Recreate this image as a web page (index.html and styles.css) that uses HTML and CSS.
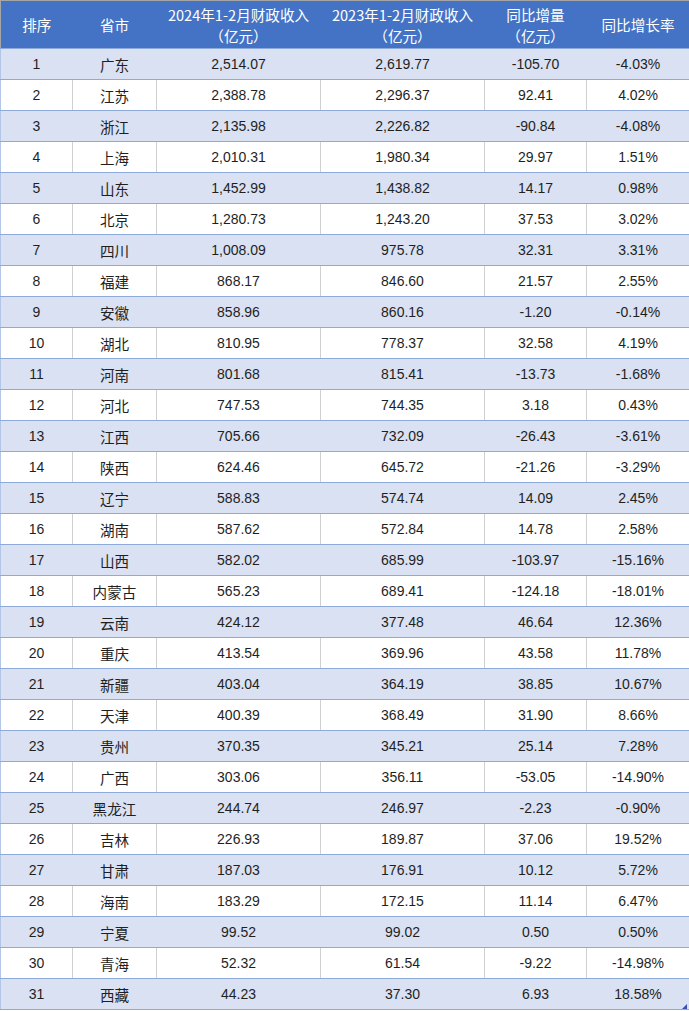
FILE: index.html
```html
<!DOCTYPE html>
<html lang="zh">
<head>
<meta charset="utf-8">
<link rel="stylesheet" href="styles.css">
</head>
<body>
<div class="wrap">
<table class="tbl">
<colgroup>
<col class="c1"><col class="c2"><col class="c3"><col class="c4"><col class="c5"><col class="c6">
</colgroup>
<thead>
<tr>
<th>排序</th><th>省市</th><th>2024年1-2月财政收入<br>（亿元）</th><th>2023年1-2月财政收入<br>（亿元）</th><th>同比增量<br>（亿元）</th><th>同比增长率</th>
</tr>
</thead>
<tbody>
<tr><td>1</td><td>广东</td><td>2,514.07</td><td>2,619.77</td><td>-105.70</td><td>-4.03%</td></tr>
<tr><td>2</td><td>江苏</td><td>2,388.78</td><td>2,296.37</td><td>92.41</td><td>4.02%</td></tr>
<tr><td>3</td><td>浙江</td><td>2,135.98</td><td>2,226.82</td><td>-90.84</td><td>-4.08%</td></tr>
<tr><td>4</td><td>上海</td><td>2,010.31</td><td>1,980.34</td><td>29.97</td><td>1.51%</td></tr>
<tr><td>5</td><td>山东</td><td>1,452.99</td><td>1,438.82</td><td>14.17</td><td>0.98%</td></tr>
<tr><td>6</td><td>北京</td><td>1,280.73</td><td>1,243.20</td><td>37.53</td><td>3.02%</td></tr>
<tr><td>7</td><td>四川</td><td>1,008.09</td><td>975.78</td><td>32.31</td><td>3.31%</td></tr>
<tr><td>8</td><td>福建</td><td>868.17</td><td>846.60</td><td>21.57</td><td>2.55%</td></tr>
<tr><td>9</td><td>安徽</td><td>858.96</td><td>860.16</td><td>-1.20</td><td>-0.14%</td></tr>
<tr><td>10</td><td>湖北</td><td>810.95</td><td>778.37</td><td>32.58</td><td>4.19%</td></tr>
<tr><td>11</td><td>河南</td><td>801.68</td><td>815.41</td><td>-13.73</td><td>-1.68%</td></tr>
<tr><td>12</td><td>河北</td><td>747.53</td><td>744.35</td><td>3.18</td><td>0.43%</td></tr>
<tr><td>13</td><td>江西</td><td>705.66</td><td>732.09</td><td>-26.43</td><td>-3.61%</td></tr>
<tr><td>14</td><td>陕西</td><td>624.46</td><td>645.72</td><td>-21.26</td><td>-3.29%</td></tr>
<tr><td>15</td><td>辽宁</td><td>588.83</td><td>574.74</td><td>14.09</td><td>2.45%</td></tr>
<tr><td>16</td><td>湖南</td><td>587.62</td><td>572.84</td><td>14.78</td><td>2.58%</td></tr>
<tr><td>17</td><td>山西</td><td>582.02</td><td>685.99</td><td>-103.97</td><td>-15.16%</td></tr>
<tr><td>18</td><td>内蒙古</td><td>565.23</td><td>689.41</td><td>-124.18</td><td>-18.01%</td></tr>
<tr><td>19</td><td>云南</td><td>424.12</td><td>377.48</td><td>46.64</td><td>12.36%</td></tr>
<tr><td>20</td><td>重庆</td><td>413.54</td><td>369.96</td><td>43.58</td><td>11.78%</td></tr>
<tr><td>21</td><td>新疆</td><td>403.04</td><td>364.19</td><td>38.85</td><td>10.67%</td></tr>
<tr><td>22</td><td>天津</td><td>400.39</td><td>368.49</td><td>31.90</td><td>8.66%</td></tr>
<tr><td>23</td><td>贵州</td><td>370.35</td><td>345.21</td><td>25.14</td><td>7.28%</td></tr>
<tr><td>24</td><td>广西</td><td>303.06</td><td>356.11</td><td>-53.05</td><td>-14.90%</td></tr>
<tr><td>25</td><td>黑龙江</td><td>244.74</td><td>246.97</td><td>-2.23</td><td>-0.90%</td></tr>
<tr><td>26</td><td>吉林</td><td>226.93</td><td>189.87</td><td>37.06</td><td>19.52%</td></tr>
<tr><td>27</td><td>甘肃</td><td>187.03</td><td>176.91</td><td>10.12</td><td>5.72%</td></tr>
<tr><td>28</td><td>海南</td><td>183.29</td><td>172.15</td><td>11.14</td><td>6.47%</td></tr>
<tr><td>29</td><td>宁夏</td><td>99.52</td><td>99.02</td><td>0.50</td><td>0.50%</td></tr>
<tr><td>30</td><td>青海</td><td>52.32</td><td>61.54</td><td>-9.22</td><td>-14.98%</td></tr>
<tr><td>31</td><td>西藏</td><td>44.23</td><td>37.30</td><td>6.93</td><td>18.58%</td></tr>
</tbody>
</table>
<span class="grip"></span>
</div>
</body>
</html>
```
FILE: styles.css
```css
html, body {
  margin: 0;
  padding: 0;
  background: #ffffff;
}
.wrap {
  position: relative;
  width: 689px;
  height: 1011px;
  overflow: hidden;
  border-top: 1px solid #a6a6a6;
  box-sizing: border-box;
}
.tbl {
  width: 689px;
  table-layout: fixed;
  border-collapse: collapse;
  font-family: "Liberation Sans", "Noto Sans CJK SC", sans-serif;
  font-size: 14px;
  color: #1f1f1f;
}
.c1 { width: 72px; }
.c2 { width: 84px; }
.c3 { width: 164px; }
.c4 { width: 164px; }
.c5 { width: 102px; }
.c6 { width: 103px; }
.tbl th {
  background: #4472c4;
  color: #ffffff;
  font-weight: normal;
  height: 47px;
  padding: 0;
  line-height: 21px;
  text-align: center;
  border-bottom: 1px solid #8eaadb;
  font-family: "Noto Sans CJK SC", sans-serif;
  font-size: 14.6px;
}
.tbl thead tr th:first-child { border-left: 1px solid #a6a6a6; }
.tbl td {
  height: 30px;
  padding: 0;
  text-align: center;
  border-bottom: 1px solid #8eaadb;
  border-left: 1px solid #d0d0d0;
}
.tbl td:nth-child(2) {
  font-family: "Noto Sans CJK SC", sans-serif;
  font-size: 14.6px;
}
.tbl td:first-child { border-left: 1px solid #b4c6e7; }
.tbl td:last-child { border-right: 1px solid #8eaadb; }
.tbl tbody tr:nth-child(odd) td {
  background: #d9e1f2;
  border-left-color: #d9e1f2;
}
.tbl tbody tr:nth-child(odd) td:first-child { border-left-color: #b4c6e7; }
.tbl tbody tr:nth-child(odd) td:last-child { border-right-color: #8eaadb; }
.grip {
  position: absolute;
  right: 2px;
  bottom: 2px;
  width: 0;
  height: 0;
  border-left: 5px solid transparent;
  border-bottom: 5px solid #3a4fae;
}
```
